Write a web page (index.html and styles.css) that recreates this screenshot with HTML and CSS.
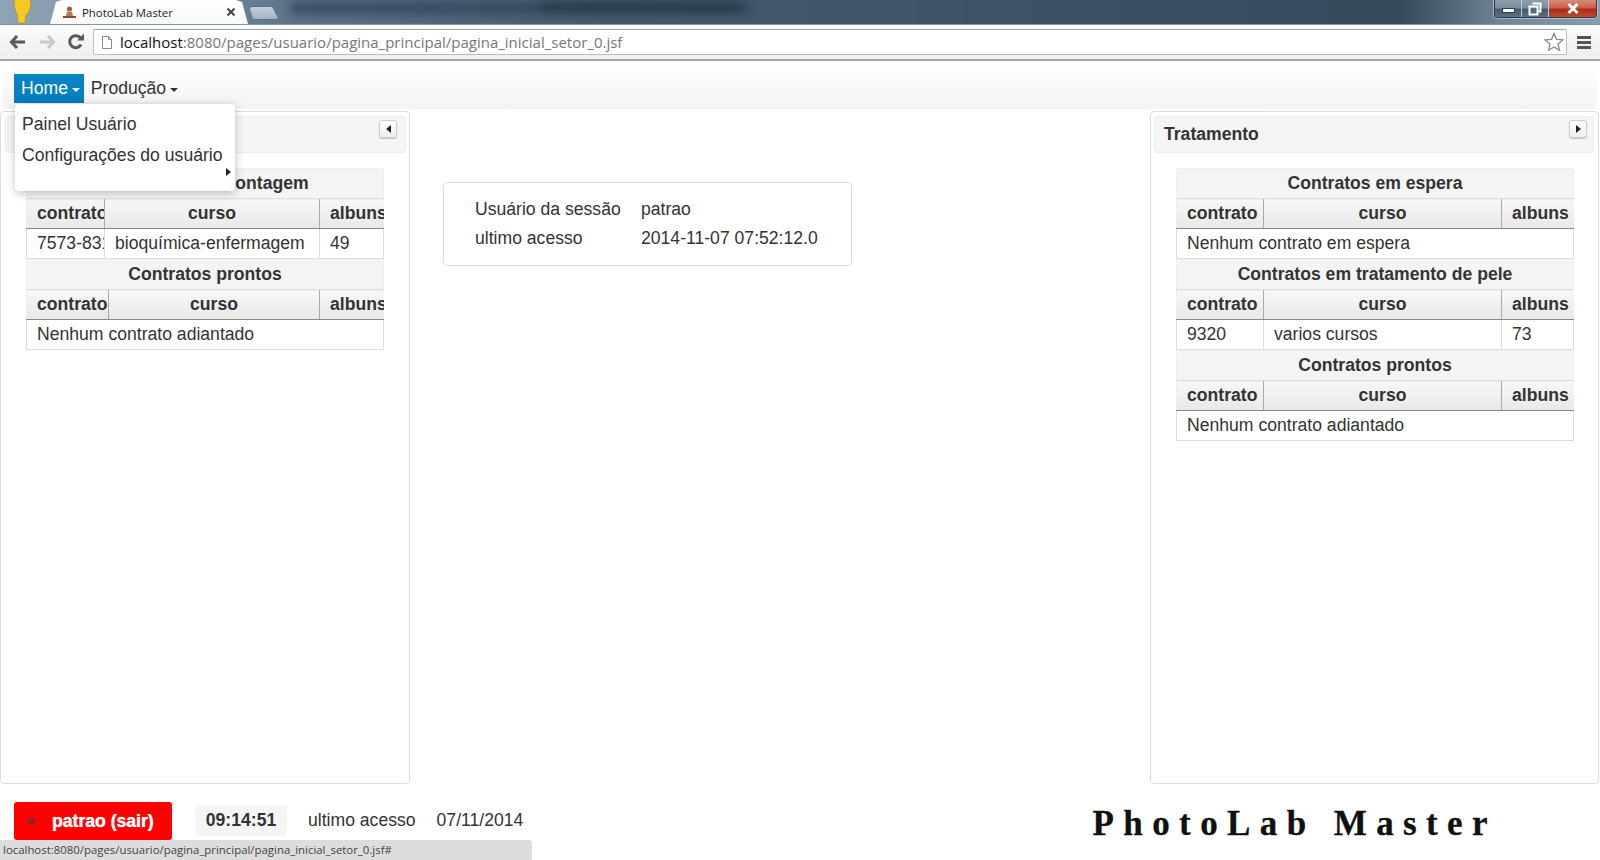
FILE: index.html
```html
<!DOCTYPE html>
<html lang="pt">
<head>
<meta charset="utf-8">
<title>PhotoLab Master</title>
<link rel="stylesheet" href="styles.css">
</head>
<body>
<div class="browser">
  <div class="tabstrip">
    <div class="blur b1"></div>
    <div class="blur b2"></div>
    <svg class="avatar" width="20" height="25" viewBox="0 0 20 25"><path d="M2.500 0H18C19 4 18.500 10 16.500 13.500 15 15.500 14 15.500 13.500 17L13 24H6L5.500 16C3 12 1.500 5 2.500 0z" fill="#f9c81e" stroke="#b08a1a" stroke-width=".6"/></svg>
    <div class="tab">
      <svg class="favicon" width="15" height="15" viewBox="0 0 15 15"><circle cx="7.5" cy="4" r="2.6" fill="#a5623a"/><path d="M5 7h5l1 4H4z" fill="#b9764e"/><path d="M1 11h13v2H1z" fill="#8a4a2e"/></svg>
      <span class="tabtitle">PhotoLab Master</span>
      <svg class="tabclose" width="10" height="10" viewBox="0 0 10 10"><path d="M1.500 1.500l7 7M8.500 1.500l-7 7" stroke="#444" stroke-width="2"/></svg>
    </div>
    <div class="newtab"></div>
    <div class="winctrls">
      <div class="wbtn wmin"><span class="minbar"></span></div>
      <div class="wbtn wmax"><svg width="14" height="14" viewBox="0 0 14 14"><path d="M4.500 1.500h8v8h-2M1.500 4.500h8v8h-8z" fill="none" stroke="#fff" stroke-width="2"/><path d="M3.500 6.500h4v4h-4z" fill="#5a6e80"/></svg></div>
      <div class="wbtn wclose"><svg width="14" height="11" viewBox="0 0 14 11"><path d="M2.500 1l9 9M11.500 1l-9 9" stroke="#fff" stroke-width="3"/></svg></div>
    </div>
  </div>
  <div class="toolbar">
    <svg class="navicon" width="18" height="16" viewBox="0 0 18 16"><path d="M8 2L2.500 8 8 14M3 8h13" fill="none" stroke="#5a5a5a" stroke-width="3"/></svg>
    <svg class="navicon" width="18" height="16" viewBox="0 0 18 16"><path d="M10 2l5.500 6L10 14M15 8H2" fill="none" stroke="#c8c8c8" stroke-width="3"/></svg>
    <svg class="navicon" width="18" height="18" viewBox="0 0 18 18"><path d="M14 11.500A6 6 0 1 1 13.500 5" fill="none" stroke="#5a5a5a" stroke-width="3"/><path d="M10 7.500h7v-7z" fill="#5a5a5a"/></svg>
    <div class="omnibox">
      <svg width="12" height="15" viewBox="0 0 12 15"><path d="M1.500 1.500h6l3 3v9h-9z" fill="#fff" stroke="#8a8a8a"/><path d="M7.500 1.500v3h3" fill="none" stroke="#8a8a8a"/></svg>
      <span class="url"><span class="host">localhost</span>:8080/pages/usuario/pagina_principal/pagina_inicial_setor_0.jsf</span>
      <svg class="star" width="20" height="20" viewBox="0 0 20 20"><path d="M10 1.500l2.500 5.800 6.300.6-4.800 4.100 1.500 6.200L10 15l-5.500 3.200L6 12 1.200 7.900l6.300-.6z" fill="#fff" stroke="#8c8c8c" stroke-width="1.300"/></svg>
    </div>
    <div class="menuicon"><span></span><span></span><span></span></div>
  </div>
</div>

<nav class="navbar">
  <a class="navitem active">Home <i class="caret white"></i></a>
  <a class="navitem">Produção <i class="caret"></i></a>
  <div class="dropdown">
    <div class="dditem">Painel Usuário</div>
    <div class="dditem">Configurações do usuário</div>
    <div class="ddsub"><i class="tri-right"></i></div>
  </div>
</nav>

<main class="main">
  <section class="panel panel-left">
    <header class="panelhead">
      <h2 class="paneltitle">Montagem</h2>
      <button class="toggle"><i class="tri-left"></i></button>
    </header>
    <div class="tables tables-left">
      <table class="grid">
        <colgroup><col class="c-a"><col><col class="c-z"></colgroup>
        <thead>
          <tr><th class="cap" colspan="3">Contratos em montagem</th></tr>
          <tr><th>contrato</th><th class="mid">curso</th><th class="last">albuns</th></tr>
        </thead>
        <tbody><tr><td>7573-831</td><td>bioquímica-enfermagem</td><td>49</td></tr></tbody>
      </table>
      <table class="grid">
        <colgroup><col class="c-b"><col><col class="c-z"></colgroup>
        <thead>
          <tr><th class="cap" colspan="3">Contratos prontos</th></tr>
          <tr><th>contrato</th><th class="mid">curso</th><th class="last">albuns</th></tr>
        </thead>
        <tbody><tr><td colspan="3">Nenhum contrato adiantado</td></tr></tbody>
      </table>
    </div>
  </section>

  <section class="center">
    <div class="session">
      <table class="sessiontable">
        <tr><td class="skey">Usuário da sessão</td><td>patrao</td></tr>
        <tr><td class="skey">ultimo acesso</td><td>2014-11-07 07:52:12.0</td></tr>
      </table>
    </div>
  </section>

  <section class="panel panel-right">
    <header class="panelhead">
      <h2 class="paneltitle">Tratamento</h2>
      <button class="toggle"><i class="tri-right"></i></button>
    </header>
    <div class="tables tables-right">
      <table class="grid">
        <colgroup><col class="c-r1"><col><col class="c-r3"></colgroup>
        <thead>
          <tr><th class="cap" colspan="3">Contratos em espera</th></tr>
          <tr><th>contrato</th><th class="mid">curso</th><th class="last">albuns</th></tr>
        </thead>
        <tbody><tr><td colspan="3">Nenhum contrato em espera</td></tr></tbody>
      </table>
      <table class="grid">
        <colgroup><col class="c-r1"><col><col class="c-r3"></colgroup>
        <thead>
          <tr><th class="cap" colspan="3">Contratos em tratamento de pele</th></tr>
          <tr><th>contrato</th><th class="mid">curso</th><th class="last">albuns</th></tr>
        </thead>
        <tbody><tr><td>9320</td><td>varios cursos</td><td>73</td></tr></tbody>
      </table>
      <table class="grid">
        <colgroup><col class="c-r1"><col><col class="c-r3"></colgroup>
        <thead>
          <tr><th class="cap" colspan="3">Contratos prontos</th></tr>
          <tr><th>contrato</th><th class="mid">curso</th><th class="last">albuns</th></tr>
        </thead>
        <tbody><tr><td colspan="3">Nenhum contrato adiantado</td></tr></tbody>
      </table>
    </div>
  </section>
</main>

<footer class="footer">
  <a class="logout"><svg width="9" height="9" viewBox="0 0 9 9"><path d="M1.500 1.500l6 6M7.500 1.500l-6 6" stroke="#6b3030" stroke-width="2.400"/></svg><span>patrao (sair)</span></a>
  <span class="clock">09:14:51</span>
  <span class="lastlabel">ultimo acesso</span>
  <span class="lastdate">07/11/2014</span>
  <span class="logo">PhotoLab Master</span>
</footer>
<div class="statusbar">localhost:8080/pages/usuario/pagina_principal/pagina_inicial_setor_0.jsf#</div>
</body>
</html>
```
FILE: styles.css
```css
* { box-sizing: border-box; }
html, body { margin: 0; height: 860px; overflow: hidden; }
body {
  font-family: "Liberation Sans", Arial, sans-serif;
  font-size: 17.600px;
  color: #333;
  background: #fff;
  display: flex;
  flex-direction: column;
  position: relative;
}

/* browser chrome */
.browser { flex: none; }
.tabstrip {
  position: relative;
  height: 25px;
  display: flex;
  align-items: flex-end;
  overflow: hidden;
  background: linear-gradient(90deg, #8fa3b6 0, #7e95aa 140px, #5b7389 300px, #45596e 600px, #3d5267 1000px, #34495c 1400px, #6f8496 1500px, #8a9cad 1600px);
  border-bottom: 1px solid #7d93aa;
}
.blur { position: absolute; filter: blur(5px); }
.b1 { left: 290px; top: 2px; width: 460px; height: 12px; background: #2f4458; opacity: .8; }
.b2 { left: 540px; top: 4px; width: 200px; height: 6px; background: #1f3040; opacity: .8; }
.avatar { position: relative; margin-left: 12px; flex: none; }
.tab {
  position: relative;
  margin-left: 18px;
  width: 198px;
  height: 24px;
  background: linear-gradient(#fff, #f8f8f8);
  clip-path: polygon(0 100%, 3% 8%, 6% 0, 94% 0, 97% 8%, 100% 100%);
  display: flex;
  align-items: center;
  padding: 0 0 0 12px;
  flex: none;
}
.favicon { flex: none; }
.tabtitle { margin-left: 5px; font-family: "Open Sans", sans-serif; font-size: 11.400px; color: #222; white-space: nowrap; width: 144px; }
.tabclose { flex: none; }
.newtab {
  position: relative;
  margin: 0 0 4px 1px;
  width: 30px;
  height: 14px;
  background: linear-gradient(#c5ced8, #a6b3c0);
  border: 1px solid #5d7185;
  border-radius: 3px;
  clip-path: polygon(0 0, 75% 0, 100% 100%, 15% 100%);
}
.winctrls {
  position: relative;
  margin-left: auto;
  margin-right: 3px;
  align-self: flex-start;
  display: flex;
  height: 18px;
  border: 1px solid #2d3b49;
  border-top: 0;
  border-radius: 0 0 4px 4px;
  overflow: hidden;
  box-shadow: 0 0 0 1px rgba(255, 255, 255, .4);
}
.wbtn { display: flex; align-items: center; justify-content: center; height: 100%; }
.wmin, .wmax { width: 27px; background: linear-gradient(#8d9fb0 0, #7a8d9f 45%, #465a6e 55%, #5d7185 100%); border-right: 1px solid #c3ccd5; }
.wclose { width: 47px; background: linear-gradient(#d88a78 0, #c9604c 45%, #ae2c18 55%, #c1482f 100%); }
.minbar { width: 13px; height: 5px; margin-top: 3px; background: #fff; border: 1px solid #333e4a; }
.toolbar {
  height: 36px;
  display: flex;
  align-items: center;
  background: linear-gradient(#fbfbfb, #eeeeee);
  border-bottom: 2px solid #a4a4a4;
  padding: 0 9px;
}
.navicon { flex: none; margin-right: 11px; }
.omnibox {
  flex: 1;
  margin-left: -3px;
  height: 26px;
  background: #fff;
  border: 1px solid #bdbdbd;
  border-top-color: #a5a5a5;
  border-radius: 2px;
  display: flex;
  align-items: center;
  padding: 0 2px 0 7px;
}
.url { margin-left: 7px; font-family: "Open Sans", sans-serif; font-size: 15px; color: #777; white-space: nowrap; }
.host { color: #111; }
.star { margin-left: auto; }
.menuicon { width: 14px; margin-left: 10px; display: flex; flex-direction: column; gap: 2px; }
.menuicon span { height: 3px; background: #555; }

/* navbar */
.navbar {
  position: relative;
  flex: none;
  height: 41px;
  margin: 7px 3px 0;
  padding: 6px 11px 0;
  display: flex;
  align-items: flex-start;
  border-radius: 4px;
  background: linear-gradient(#fefefe, #f3f3f3);
}
.navitem { height: 29px; line-height: 29px; padding: 0 4px 0 7px; color: #333; white-space: nowrap; }
.navitem.active { color: #fff; background: linear-gradient(#0085c7, #007dbd); }
.caret { display: inline-block; vertical-align: 2px; margin-left: -1px; border: 4px solid transparent; border-top-color: #333; border-bottom: 0; }
.caret.white { border-top-color: #fff; }
.dropdown {
  position: absolute;
  left: 12px;
  top: 36px;
  z-index: 5;
  width: 220px;
  height: 87px;
  background: #fff;
  border-radius: 4px;
  box-shadow: 0 2px 10px rgba(0, 0, 0, .25);
  padding-top: 5px;
}
.dditem { height: 31px; line-height: 30px; padding-left: 7px; white-space: nowrap; }
.ddsub { display: flex; justify-content: flex-end; margin-top: -3px; padding-right: 4px; }
.tri-right { display: block; border: 4px solid transparent; border-left: 5px solid #222; border-right: 0; }
.tri-left { display: block; border: 4px solid transparent; border-right: 5px solid #222; border-left: 0; }

/* main */
.main { flex: none; height: 673px; margin-top: 2px; display: flex; align-items: stretch; }
.panel { background: #fff; border: 1px solid #ddd; border-radius: 4px; padding: 4px; }
.panel-left { width: 410px; padding-right: 3px; }
.panel-right { width: 449px; margin-right: 1px; padding-left: 3px; }
.panel-right .panelhead { padding-right: 6px; }
.center { flex: 1; padding: 71px 0 0 33px; }
.panelhead {
  height: 37px;
  background: #f5f5f5;
  border: 1px solid #eee;
  border-radius: 4px;
  padding: 3px 8px 0 9px;
  display: flex;
  justify-content: space-between;
  align-items: flex-start;
}
.paneltitle { margin: 0; font-size: 17.600px; font-weight: bold; line-height: 29px; color: #333; }
.toggle {
  width: 18px;
  height: 18px;
  padding: 0;
  margin-top: 0;
  background: linear-gradient(#fff, #eee);
  border: 1px solid #ccc;
  border-radius: 3px;
  box-shadow: 0 1px 1px rgba(0, 0, 0, .2);
  display: flex;
  align-items: center;
  justify-content: center;
}
.tables { display: flex; flex-direction: column; padding-top: 15px; }
.tables-left { padding-left: 21px; }
.tables-right { padding-left: 22px; }
.grid { table-layout: fixed; border-collapse: collapse; }
.tables-left .grid { width: 358px; }
.tables-right .grid { width: 398px; }
.c-a { width: 78px; }
.c-b { width: 82px; }
.c-z { width: 64px; }
.c-r1 { width: 87px; }
.c-r3 { width: 72px; }
.grid th, .grid td {
  height: 30px;
  padding: 0 0 2px 10px;
  overflow: hidden;
  white-space: nowrap;
  text-align: left;
  line-height: 24px;
}
.grid th { font-weight: bold; background: linear-gradient(#f7f7f7, #e8e8e8); border-bottom: 1px solid #888; border-left: 1px solid #aaa; }
.grid th:first-child { border-left: 1px solid #eee; }
.grid th.mid { text-align: center; padding: 0 0 2px; }
.grid th.cap { text-align: center; background: #f4f4f4; border: 1px solid #eee; border-radius: 4px 4px 0 0; padding: 0 0 2px; border-bottom-color: #ddd; }
.grid td { border: 1px solid #ddd; }

/* center */
.session { width: 409px; height: 84px; border: 1px solid #ddd; border-radius: 4px; padding: 12px 0 0 23px; }
.sessiontable { border-collapse: collapse; }
.sessiontable td { height: 29px; padding: 0 8px; white-space: nowrap; }
.skey { width: 166px; }

/* footer */
.footer { position: relative; flex: 1; display: flex; align-items: flex-start; padding-top: 18px; }
.logout {
  margin-left: 14px;
  width: 158px;
  height: 38px;
  background: #f00;
  border-radius: 3px;
  display: flex;
  align-items: center;
  padding-left: 13px;
  color: #fff;
  font-weight: bold;
  text-shadow: 0 0 1px #fff;
}
.logout span { margin-left: 16px; }
.clock { margin: 3px 0 0 23px; width: 92px; height: 31px; line-height: 30px; text-align: center; font-weight: bold; background: #f5f5f5; border-radius: 3px; }
.lastlabel { margin: 3px 0 0 21px; line-height: 30px; }
.lastdate { margin: 3px 0 0 21px; line-height: 30px; }
.logo {
  margin: 2px 103px 0 auto;
  font-family: "Liberation Serif", serif;
  font-weight: bold;
  font-size: 35px;
  line-height: 40px;
  letter-spacing: 9.400px;
  -webkit-text-stroke: .3px #111;
  color: #111;
  white-space: nowrap;
}
.statusbar {
  position: absolute;
  left: 0;
  bottom: 0;
  width: 532px;
  height: 20px;
  background: #ddd;
  border-radius: 0 3px 0 0;
  padding-left: 3px;
  font-family: "Open Sans", sans-serif;
  font-size: 11.400px;
  line-height: 20px;
  color: #444;
  white-space: nowrap;
}
```
